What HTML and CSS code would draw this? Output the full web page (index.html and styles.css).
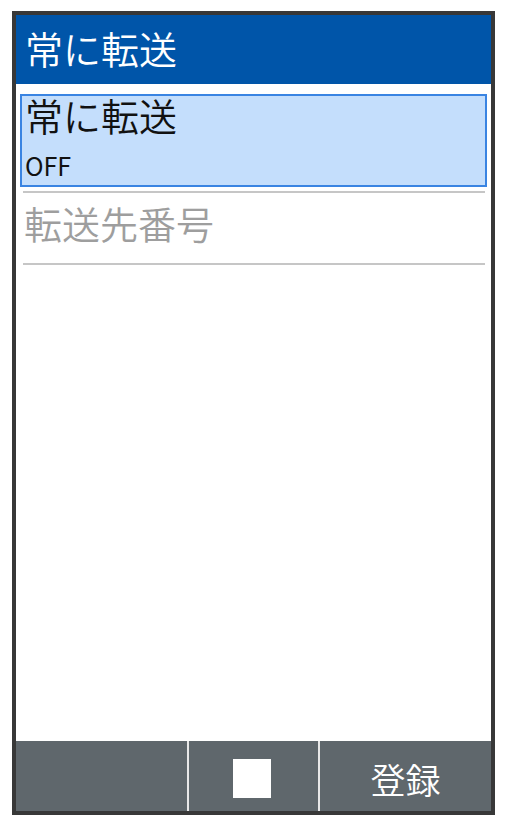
FILE: index.html
```html
<!DOCTYPE html>
<html lang="ja">
<head>
  <meta charset="UTF-8">
  <meta name="viewport" content="width=device-width, initial-scale=1.0">
  <title>常に転送</title>
  <link rel="stylesheet" href="styles.css">
</head>
<body>
  <div class="phone">
    <div class="header">常に転送</div>

    <div class="list">
      <div class="item selected">
        <div class="item-title">常に転送</div>
        <div class="item-value">OFF</div>
      </div>
      <div class="divider"></div>
      <div class="item disabled">
        <div class="item-title">転送先番号</div>
      </div>
      <div class="divider"></div>
    </div>

    <div class="softkeys">
      <div class="key key-left"></div>
      <div class="key key-center"><span class="square"></span></div>
      <div class="key key-right">登録</div>
    </div>
  </div>
</body>
</html>
```

FILE: styles.css
```css
html, body {
  margin: 0;
  padding: 0;
  background: #ffffff;
}
body {
  font-family: "Noto Sans CJK JP", "Noto Sans", sans-serif;
  font-weight: 350;
  color: #111;
}
.phone {
  box-sizing: border-box;
  width: 483px;
  height: 804px;
  margin: 11px 0 0 12px;
  border: 4px solid #383838;
  display: flex;
  flex-direction: column;
  background: #fff;
}
.header {
  height: 69px;
  flex: none;
  background: #0055a9;
  color: #fff;
  font-size: 38px;
  line-height: 1;
  padding: 0 0 3px 9px;
  box-sizing: border-box;
  display: flex;
  align-items: center;
}
.list {
  flex: 1;
  padding: 10px 4px 0;
}
.item {
  padding-left: 4px;
}
.item-title {
  font-size: 38px;
  line-height: 1;
}
.item.selected {
  box-sizing: border-box;
  height: 93px;
  border: 2px solid #3a84e2;
  background: #c4defc;
  padding-left: 3px;
}
.item-value {
  font-size: 25px;
  font-weight: 400;
  line-height: 1;
  margin-top: 19px;
}
.item.disabled {
  height: 70px;
  box-sizing: border-box;
  padding-top: 11px;
  color: #9e9e9e;
}
.divider {
  height: 2px;
  background: #c6c6c6;
  margin: 4px 2px 0 3px;
}
.item.disabled + .divider {
  margin-top: 0;
}
.softkeys {
  height: 70px;
  flex: none;
  display: flex;
  background: #5f676c;
}
.key {
  display: flex;
  align-items: center;
  justify-content: center;
  padding-top: 4px;
  box-sizing: border-box;
  color: #fff;
  font-size: 35px;
  line-height: 1;
}
.key-left {
  width: 173px;
  border-right: 2px solid #e8e8e8;
}
.key-center {
  width: 131px;
  border-right: 2px solid #e8e8e8;
}
.key-right {
  flex: 1;
}
.square {
  display: block;
  width: 38px;
  height: 39px;
  margin-right: 3px;
  background: #fff;
}
```
